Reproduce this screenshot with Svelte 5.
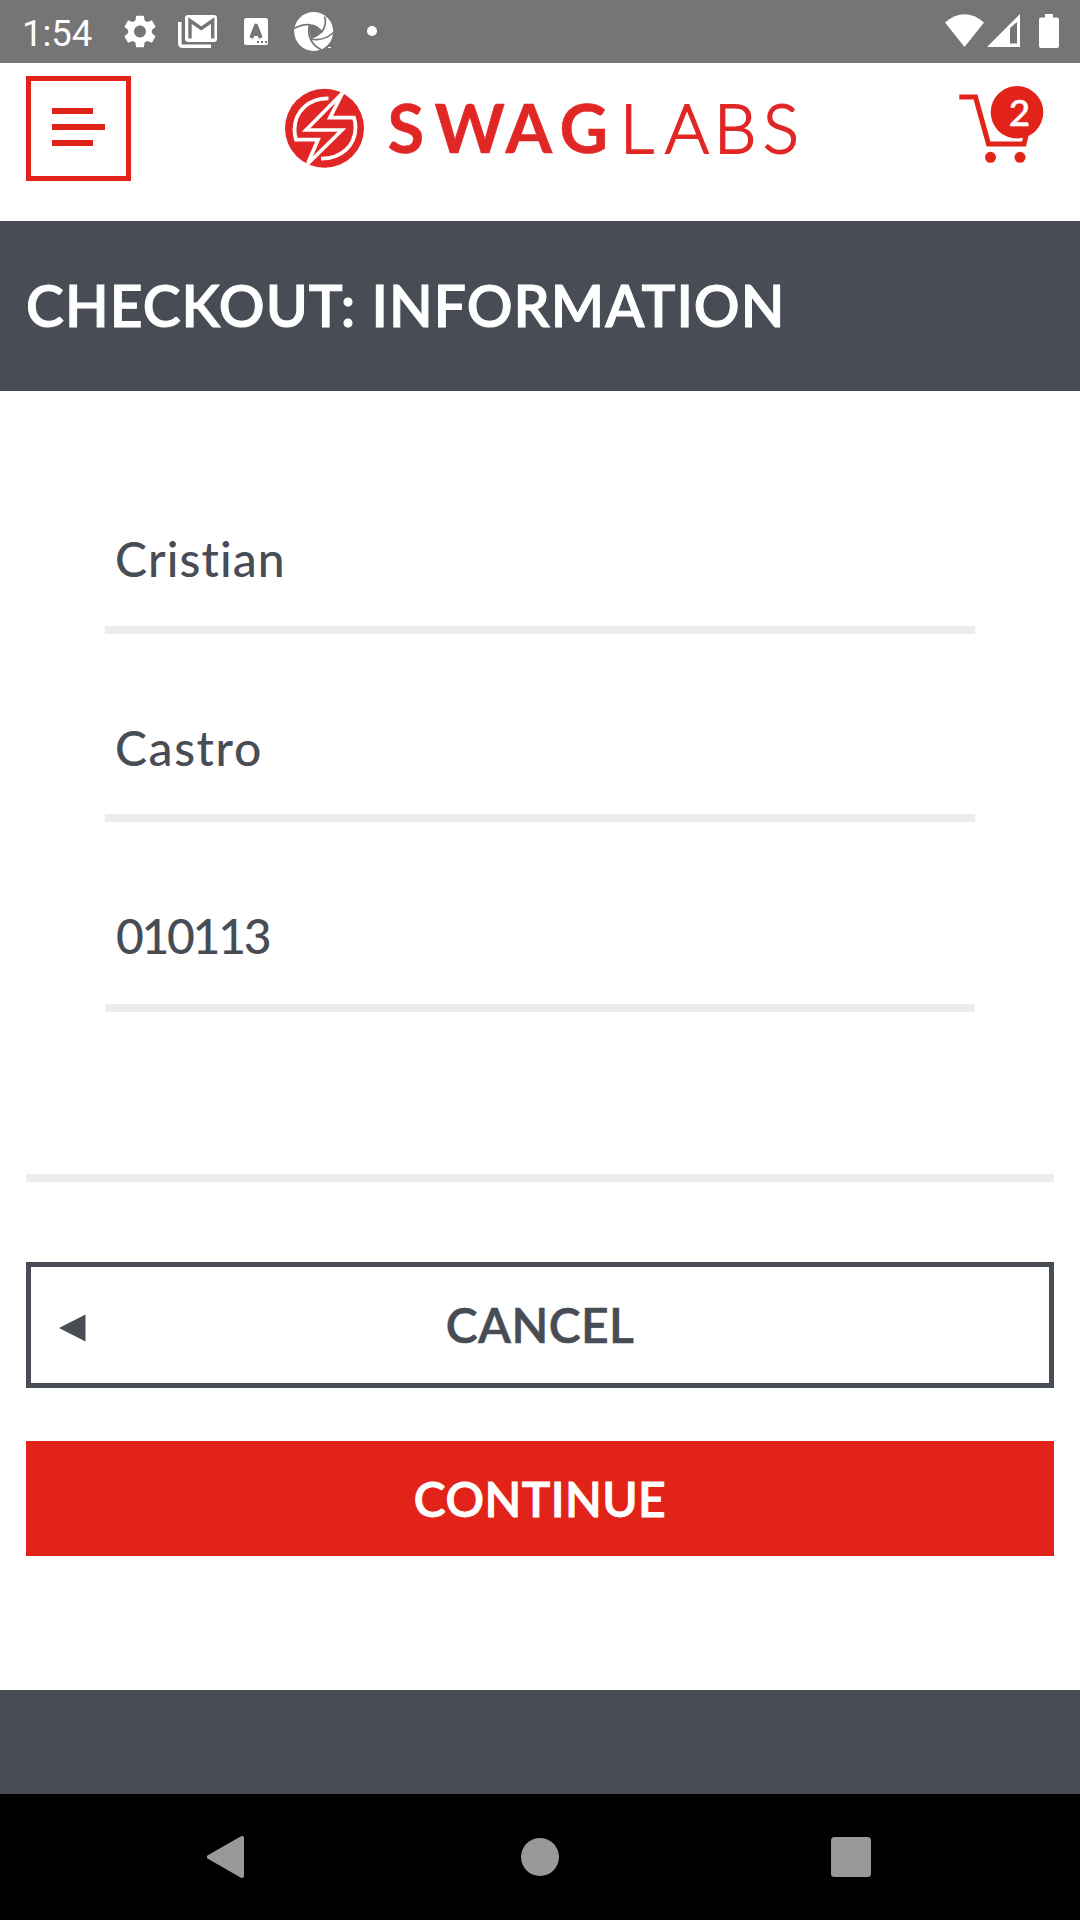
<script>
  let fields = $state([
    { id: 'first', value: 'Cristian' },
    { id: 'last', value: 'Castro' },
    { id: 'zip', value: '010113' }
  ]);
</script>

<div class="screen">
  <div class="status">
    <span class="clock">1:54</span>
    <svg class="notif" width="270" height="63" viewBox="110 0 270 63">
      <g transform="translate(120.2 11.7) scale(1.65)">
        <path fill="#fff" d="M19.14 12.94c.04-.3.06-.61.06-.94 0-.32-.02-.64-.07-.94l2.03-1.58c.18-.14.23-.41.12-.61l-1.92-3.32c-.12-.22-.37-.29-.59-.22l-2.39.96c-.5-.38-1.03-.7-1.62-.94l-.36-2.54c-.04-.24-.24-.41-.48-.41h-3.84c-.24 0-.43.17-.47.41l-.36 2.54c-.59.24-1.13.57-1.62.94l-2.39-.96c-.22-.08-.47 0-.59.22L2.74 8.87c-.12.21-.08.47.12.61l2.03 1.58c-.05.3-.09.63-.09.94s.02.64.07.94l-2.03 1.58c-.18.14-.23.41-.12.61l1.92 3.32c.12.22.37.29.59.22l2.39-.96c.5.38 1.03.7 1.62.94l.36 2.54c.05.24.24.41.48.41h3.84c.24 0 .44-.17.47-.41l.36-2.54c.59-.24 1.13-.56 1.62-.94l2.39.96c.22.08.47 0 .59-.22l1.92-3.32c.12-.22.07-.47-.12-.61l-2.01-1.58zM12 15.6c-1.98 0-3.6-1.62-3.6-3.6s1.62-3.6 3.6-3.6 3.6 1.62 3.6 3.6-1.62 3.6-3.6 3.6z" />
      </g>
      <path fill="none" stroke="#fff" stroke-width="3.6" d="M179.8 22V43.2Q179.8 46.2 182.8 46.2H211" />
      <rect x="185" y="15" width="32" height="27" rx="3" fill="#fff" />
      <path fill="none" stroke="#757575" stroke-width="3.4" d="M190 38.500V20.5L201.3 28.5L212.7 20.5V38.500" />
      <rect x="244" y="18" width="24" height="27" rx="2" fill="#fff" />
      <path fill="none" stroke="#757575" stroke-width="3.9" stroke-linejoin="round" d="M251.2 38L256 25.5L260.8 38M252.5 34H259.5" />
      <path fill="#757575" d="M257 41h2v2h-2zM261 41h2v2h-2zM265 41h2v2h-2z" />
      <circle cx="313.7" cy="31.5" r="19.5" fill="#fff" />
      <path fill="#757575" d="M309.300 24.700Q317 25 322.300 32.300Q318 37 311.700 39Q308 32 309.300 24.700Z" />
      <path fill="none" stroke="#757575" stroke-width="1.7" d="M294.500 28.500Q303 23.500 311 25Q318 26 322.300 32.300M324.500 16.500Q327.500 24 321.500 32.500M333.500 32.500Q324 41.500 311 39M321.500 50Q306 42 309.300 24.700" />
      <path fill="#fff" d="M328 47h3v1h-3z" />
      <circle cx="372" cy="31" r="5" fill="#fff" />
    </svg>
    <svg class="system" width="120" height="63" viewBox="940 0 120 63">
      <path fill="#fff" d="M945 22.5Q964.500 6 984 22.500L964.500 47Z" />
      <path fill="#fff" fill-rule="evenodd" d="M987 47L1020 14V47ZM1010 28V43.500H1017V22Z" />
      <path fill="#fff" d="M1045 14h8v3.500h4q2 0 2 2V46q0 2-2 2h-16q-2 0-2-2V19.500q0-2 2-2h4z" />
    </svg>
  </div>

  <header>
    <button class="menu" aria-label="Menu">
      <svg width="53" height="38" viewBox="0 0 53 38" fill="#e2231a">
        <path d="M0 0h41v6H0zM0 16h53v6H0zM0 32h41v6H0z" />
      </svg>
    </button>
    <svg class="logo" width="520" height="90" viewBox="280 83 520 90">
      <circle cx="324.500" cy="128.300" r="39.500" fill="#e12726" />
      <g fill="none" stroke="#fff" stroke-width="3.800">
        <path d="M328.500 98.300C309 98 295 111 294.500 129Q294.500 135 296 139.700H318L308 163" />
        <path d="M321 158.700C341 159 355 146 355.500 128Q355.500 122 354 117.700H330L342.500 93" />
      </g>
      <path fill="none" stroke="#fff" stroke-width="3.600" d="M342.500 93L306 130H342L307.500 164" />
      <g class="word" fill="#e12726">
        <text class="bold" x="387.500 434.500 505.500 559.500" y="152.500">SWAG</text>
        <text class="thin" x="620 665 714 763" y="152.500">LABS</text>
      </g>
    </svg>
    <svg class="cart" width="90" height="90" viewBox="955 83 90 90">
      <path fill="none" stroke="#e2231a" stroke-width="5" d="M959.300 97H975.500L988.500 144H1024L1032 112" />
      <circle cx="990.500" cy="157.300" r="5.500" fill="#e2231a" />
      <circle cx="1020" cy="157.300" r="5.500" fill="#e2231a" />
      <circle cx="1017" cy="112.300" r="26.300" fill="#e2231a" />
      <text class="count" x="1019.500" y="125.500" text-anchor="middle" fill="#fff">2</text>
    </svg>
  </header>

  <h1>CHECKOUT: INFORMATION</h1>

  <form>
    {#each fields as f (f.id)}
      <div class="field {f.id}"><span>{f.value}</span></div>
    {/each}
  </form>

  <div class="actions">
    <button class="cancel" type="button">
      <svg width="28" height="30" viewBox="0 0 28 30"><path fill="#474c55" d="M0 15L26.500 1.500V28.500Z" /></svg>
      <span>CANCEL</span>
    </button>
    <button class="continue" type="button"><span>CONTINUE</span></button>
  </div>

  <footer></footer>

  <nav>
    <svg width="44" height="44" viewBox="203 1835 44 44"><path fill="#999" stroke="#999" stroke-width="4" stroke-linejoin="round" d="M208.800 1857L242 1838V1876Z" /></svg>
    <svg width="40" height="40" viewBox="0 0 40 40"><circle cx="21" cy="20" r="19" fill="#999" /></svg>
    <svg width="40" height="40" viewBox="0 0 40 40"><rect width="40" height="40" rx="3.500" fill="#999" /></svg>
  </nav>
</div>

<style>
  :global(body) {
    margin: 0;
    background: #fff;
  }
  .screen {
    width: 1080px;
    height: 1920px;
    display: flex;
    flex-direction: column;
    overflow: hidden;
    background: #fff;
    color: #474c55;
    font-family: Lato, "Open Sans", sans-serif;
    font-variant-ligatures: none;
  }
  button {
    font: inherit;
    letter-spacing: inherit;
    border-radius: 0;
    box-sizing: border-box;
    padding: 0;
    margin: 0;
  }
  svg {
    display: block;
    flex: none;
  }
  .status {
    height: 63px;
    flex: none;
    display: flex;
    align-items: center;
    background: #757575;
    color: #fff;
  }
  .clock {
    width: 88px;
    padding: 4px 0 0 22px;
    font: 400 36.5px/59px Roboto, sans-serif;
  }
  .system {
    margin-left: auto;
    margin-right: 20px;
  }
  header {
    height: 158px;
    flex: none;
    display: flex;
    align-items: flex-start;
    box-sizing: border-box;
    padding: 13px 35px 0 26px;
  }
  .menu {
    width: 105px;
    height: 105px;
    border: 5px solid #e2231a;
    background: #fff;
    display: flex;
    align-items: flex-start;
    padding: 27px 0 0 21px;
  }
  .logo {
    margin: 7px 0 0 149px;
  }
  .cart {
    margin: 7px 0 0 auto;
  }
  .word {
    font-size: 67px;
  }
  .bold {
    font-weight: 700;
    stroke: #e12726;
    stroke-width: 0.5px;
  }
  .thin {
    font-weight: 300;
    stroke: #e12726;
    stroke-width: 1.8px;
  }
  .count {
    font-size: 37px;
    font-weight: 500;
    stroke: #fff;
    stroke-width: 0.5px;
  }
  h1 {
    height: 170px;
    flex: none;
    box-sizing: border-box;
    margin: 0;
    padding-left: 26px;
    background: #474c55;
    color: #fff;
    font-size: 57px;
    font-weight: 600;
    line-height: 168px;
    letter-spacing: 1.03px;
    -webkit-text-stroke: 1px #fff;
    white-space: nowrap;
  }
  form {
    flex: none;
    padding: 77px 105px 0;
  }
  .field {
    box-sizing: border-box;
    height: 188px;
    padding: 84px 0 0 10px;
    border-bottom: 8px solid #ececee;
    font-size: 48px;
    font-weight: 500;
    line-height: 60px;
  }
  .first {
    height: 166px;
    padding-top: 61px;
    letter-spacing: 1.1px;
  }
  .last {
    letter-spacing: 1.6px;
  }
  .zip {
    height: 190px;
    padding-top: 84px;
    padding-left: 11px;
    letter-spacing: -2.3px;
  }
  .actions {
    flex: none;
    box-sizing: border-box;
    height: 516px;
    margin: 162px 26px 0;
    border-top: 8px solid #ececee;
    padding-top: 80px;
    display: flex;
    flex-direction: column;
    gap: 53px;
    font-size: 48px;
    font-weight: 600;
    letter-spacing: 0.4px;
  }
  .cancel {
    height: 126px;
    border: 5px solid #474c55;
    background: #fff;
    color: #474c55;
    display: grid;
    grid-template-columns: 28px 1fr 28px;
    align-items: center;
    padding: 0 28px 2px;
    -webkit-text-stroke: 0.6px #474c55;
  }
  .cancel svg {
    margin-top: 8px;
  }
  .continue {
    height: 115px;
    border: 0;
    padding-bottom: 1px;
    background: #e2231a;
    color: #fff;
    -webkit-text-stroke: 0.9px #fff;
  }
  footer {
    flex: none;
    height: 104px;
    background: #474c55;
  }
  nav {
    flex: none;
    height: 126px;
    box-sizing: border-box;
    padding: 0 209px 0 203px;
    display: flex;
    align-items: center;
    justify-content: space-between;
    background: #000;
  }
</style>
